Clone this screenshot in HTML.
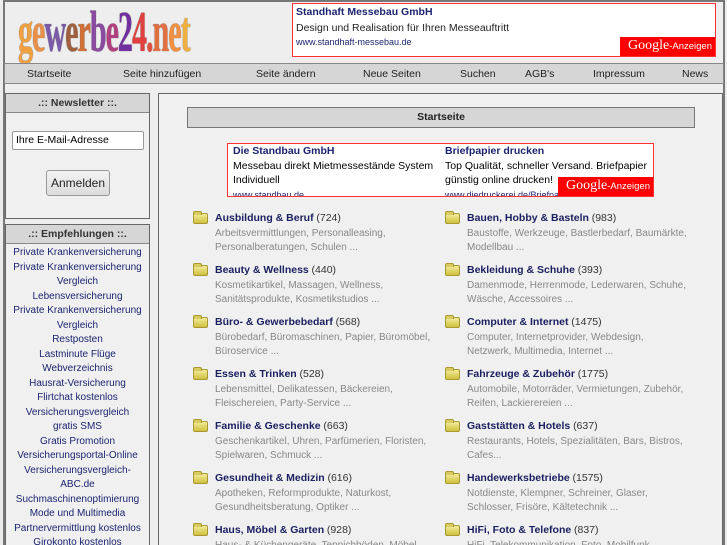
<!DOCTYPE html>
<html><head><meta charset="utf-8">
<style>
*{margin:0;padding:0;box-sizing:border-box}
html,body{width:727px;height:545px;overflow:hidden}
body{background:#ececec;font-family:"Liberation Sans",sans-serif;position:relative}
.abs{position:absolute}
#frame{left:3px;top:0;width:722px;height:560px;border:2px solid #777;border-bottom:none;background:#eee}
#logo{left:18px;top:2px;font-family:"Liberation Serif",serif;font-size:58px;font-weight:bold;letter-spacing:-2px;transform:scaleX(0.52);transform-origin:left;line-height:60px;white-space:nowrap;text-shadow:0 0 1px #333}
#ad1{left:292px;top:3px;width:424px;height:54px;border:1px solid #f33;background:#fff;font-size:10.5px}
.g{position:absolute;right:0;bottom:0;background:#f00;color:#fff;font-size:9.5px;padding:1px 3px 2px 8px;white-space:nowrap}
.g b{font-family:"Liberation Serif",serif;font-size:14px;font-weight:normal}
#nav{left:4px;top:63px;width:720px;height:21px;background:#d6d6d6;border:1px solid #888;font-size:10.5px;color:#222}
#nav span{position:absolute;top:4px}
.box{border:1px solid #666;background:#f0f0f0}
.hd{background:#d6d6d6;border-bottom:1px solid #888;text-align:center;font-size:10.5px;font-weight:bold;color:#333;height:19px;line-height:18px}
.lnk{text-align:center;font-size:10px;color:#1b2470;line-height:14.5px}
.cat{position:absolute;font-size:10px;line-height:14.5px;width:250px}
.cat b{color:#1b2160;font-size:10.5px}
.cat .c{color:#333;font-size:10.5px}
.cat .d{color:#888}
.fd{position:absolute;width:15px;height:11px;background:linear-gradient(#f2ec9a,#cfc040);border:1px solid #a89a30;border-radius:2px}
.fd:before{content:"";position:absolute;left:-1px;top:-3px;width:7px;height:3px;background:#d8cc60;border:1px solid #a89a30;border-bottom:none;border-radius:2px 2px 0 0}
</style></head><body>
<div id="frame" class="abs"></div>
<div id="logo" class="abs"><span style="color:#f0a040">g</span><span style="color:#e89048">e</span><span style="color:#7a5aa8">w</span><span style="color:#a06040">e</span><span style="color:#d07038">r</span><span style="color:#8a4aa0">b</span><span style="color:#b04080">e</span><span style="color:#7030a0">2</span><span style="color:#e04040">4</span><span style="color:#e05040">.</span><span style="color:#e07040">n</span><span style="color:#f09040">e</span><span style="color:#f0b040">t</span></div>
<div id="ad1" class="abs">
<div style="position:absolute;left:3px;top:2px;font-weight:bold;color:#1b2470">Standhaft Messebau GmbH</div>
<div style="position:absolute;left:3px;top:18px;color:#222">Design und Realisation für Ihren Messeauftritt</div>
<div style="position:absolute;left:3px;top:33px;color:#1b2470;font-size:9px">www.standhaft-messebau.de</div>
<div class="g"><b>Google</b>-Anzeigen</div>
</div>
<div id="nav" class="abs">
<span style="left:22px">Startseite</span><span style="left:118px">Seite hinzufügen</span><span style="left:251px">Seite ändern</span><span style="left:358px">Neue Seiten</span><span style="left:455px">Suchen</span><span style="left:520px">AGB's</span><span style="left:588px">Impressum</span><span style="left:677px">News</span>
</div>
<div class="abs box" style="left:5px;top:93px;width:145px;height:126px">
<div class="hd">.:: Newsletter ::.</div>
<div style="position:absolute;left:6px;top:37px;width:132px;height:19px;background:#fff;border:1px solid #999;border-radius:2px;font-size:10.5px;padding:2px 3px">Ihre E-Mail-Adresse</div>
<div style="position:absolute;left:40px;top:76px;width:64px;height:26px;background:linear-gradient(#f4f4f4,#dcdcdc);border:1px solid #999;border-radius:3px;font-size:12px;text-align:center;line-height:24px;color:#222">Anmelden</div>
</div>
<div class="abs box" style="left:5px;top:224px;width:145px;height:330px">
<div class="hd">.:: Empfehlungen ::.</div>
<div class="lnk" style="padding-top:2px">Private Krankenversicherung<br>Private Krankenversicherung<br>Vergleich<br>Lebensversicherung<br>Private Krankenversicherung<br>Vergleich<br>Restposten<br>Lastminute Flüge<br>Webverzeichnis<br>Hausrat-Versicherung<br>Flirtchat kostenlos<br>Versicherungsvergleich<br>gratis SMS<br>Gratis Promotion<br>Versicherungsportal-Online<br>Versicherungsvergleich-<br>ABC.de<br>Suchmaschinenoptimierung<br>Mode und Multimedia<br>Partnervermittlung kostenlos<br>Girokonto kostenlos</div>
</div>
<div class="abs box" style="left:158px;top:93px;width:565px;height:470px"></div>
<div class="abs" style="left:187px;top:107px;width:508px;height:21px;background:#d6d6d6;border:1px solid #777;text-align:center;font-size:10.5px;font-weight:bold;line-height:19px;color:#222">Startseite</div>
<div class="abs" style="left:227px;top:143px;width:427px;height:54px;border:1px solid #f33;background:#fff;font-size:10.5px;overflow:hidden">
<div style="position:absolute;left:5px;top:0px;line-height:14.5px;width:205px"><b style="color:#1b2470">Die Standbau GmbH</b><br>Messebau direkt Mietmessestände System Individuell<br><span style="color:#1b2470;font-size:9px">www.standbau.de</span></div>
<div style="position:absolute;left:217px;top:0px;line-height:14.5px;width:208px"><b style="color:#1b2470">Briefpapier drucken</b><br>Top Qualität, schneller Versand. Briefpapier günstig online drucken!<br><span style="color:#1b2470;font-size:9px">www.diedruckerei.de/Briefpapier</span></div>
<div class="g"><b>Google</b>-Anzeigen</div>
</div>

<div class="fd" style="left:193px;top:213px"></div><div class="cat" style="left:215px;top:211px"><b>Ausbildung &amp; Beruf</b> <span class="c">(724)</span><br><span class="d">Arbeitsvermittlungen, Personalleasing,<br>Personalberatungen, Schulen ...</span></div>
<div class="fd" style="left:193px;top:265px"></div><div class="cat" style="left:215px;top:263px"><b>Beauty &amp; Wellness</b> <span class="c">(440)</span><br><span class="d">Kosmetikartikel, Massagen, Wellness,<br>Sanitätsprodukte, Kosmetikstudios ...</span></div>
<div class="fd" style="left:193px;top:317px"></div><div class="cat" style="left:215px;top:315px"><b>Büro- &amp; Gewerbebedarf</b> <span class="c">(568)</span><br><span class="d">Bürobedarf, Büromaschinen, Papier, Büromöbel,<br>Büroservice ...</span></div>
<div class="fd" style="left:193px;top:369px"></div><div class="cat" style="left:215px;top:367px"><b>Essen &amp; Trinken</b> <span class="c">(528)</span><br><span class="d">Lebensmittel, Delikatessen, Bäckereien,<br>Fleischereien, Party-Service ...</span></div>
<div class="fd" style="left:193px;top:421px"></div><div class="cat" style="left:215px;top:419px"><b>Familie &amp; Geschenke</b> <span class="c">(663)</span><br><span class="d">Geschenkartikel, Uhren, Parfümerien, Floristen,<br>Spielwaren, Schmuck ...</span></div>
<div class="fd" style="left:193px;top:473px"></div><div class="cat" style="left:215px;top:471px"><b>Gesundheit &amp; Medizin</b> <span class="c">(616)</span><br><span class="d">Apotheken, Reformprodukte, Naturkost,<br>Gesundheitsberatung, Optiker ...</span></div>
<div class="fd" style="left:193px;top:525px"></div><div class="cat" style="left:215px;top:523px"><b>Haus, Möbel &amp; Garten</b> <span class="c">(928)</span><br><span class="d">Haus- &amp; Küchengeräte, Teppichböden, Möbel</span></div>

<div class="fd" style="left:445px;top:213px"></div><div class="cat" style="left:467px;top:211px"><b>Bauen, Hobby &amp; Basteln</b> <span class="c">(983)</span><br><span class="d">Baustoffe, Werkzeuge, Bastlerbedarf, Baumärkte,<br>Modellbau ...</span></div>
<div class="fd" style="left:445px;top:265px"></div><div class="cat" style="left:467px;top:263px"><b>Bekleidung &amp; Schuhe</b> <span class="c">(393)</span><br><span class="d">Damenmode, Herrenmode, Lederwaren, Schuhe,<br>Wäsche, Accessoires ...</span></div>
<div class="fd" style="left:445px;top:317px"></div><div class="cat" style="left:467px;top:315px"><b>Computer &amp; Internet</b> <span class="c">(1475)</span><br><span class="d">Computer, Internetprovider, Webdesign,<br>Netzwerk, Multimedia, Internet ...</span></div>
<div class="fd" style="left:445px;top:369px"></div><div class="cat" style="left:467px;top:367px"><b>Fahrzeuge &amp; Zubehör</b> <span class="c">(1775)</span><br><span class="d">Automobile, Motorräder, Vermietungen, Zubehör,<br>Reifen, Lackierereien ...</span></div>
<div class="fd" style="left:445px;top:421px"></div><div class="cat" style="left:467px;top:419px"><b>Gaststätten &amp; Hotels</b> <span class="c">(637)</span><br><span class="d">Restaurants, Hotels, Spezialitäten, Bars, Bistros,<br>Cafes...</span></div>
<div class="fd" style="left:445px;top:473px"></div><div class="cat" style="left:467px;top:471px"><b>Handewerksbetriebe</b> <span class="c">(1575)</span><br><span class="d">Notdienste, Klempner, Schreiner, Glaser,<br>Schlosser, Frisöre, Kältetechnik ...</span></div>
<div class="fd" style="left:445px;top:525px"></div><div class="cat" style="left:467px;top:523px"><b>HiFi, Foto &amp; Telefone</b> <span class="c">(837)</span><br><span class="d">HiFi, Telekommunikation, Foto, Mobilfunk</span></div>
</body></html>
